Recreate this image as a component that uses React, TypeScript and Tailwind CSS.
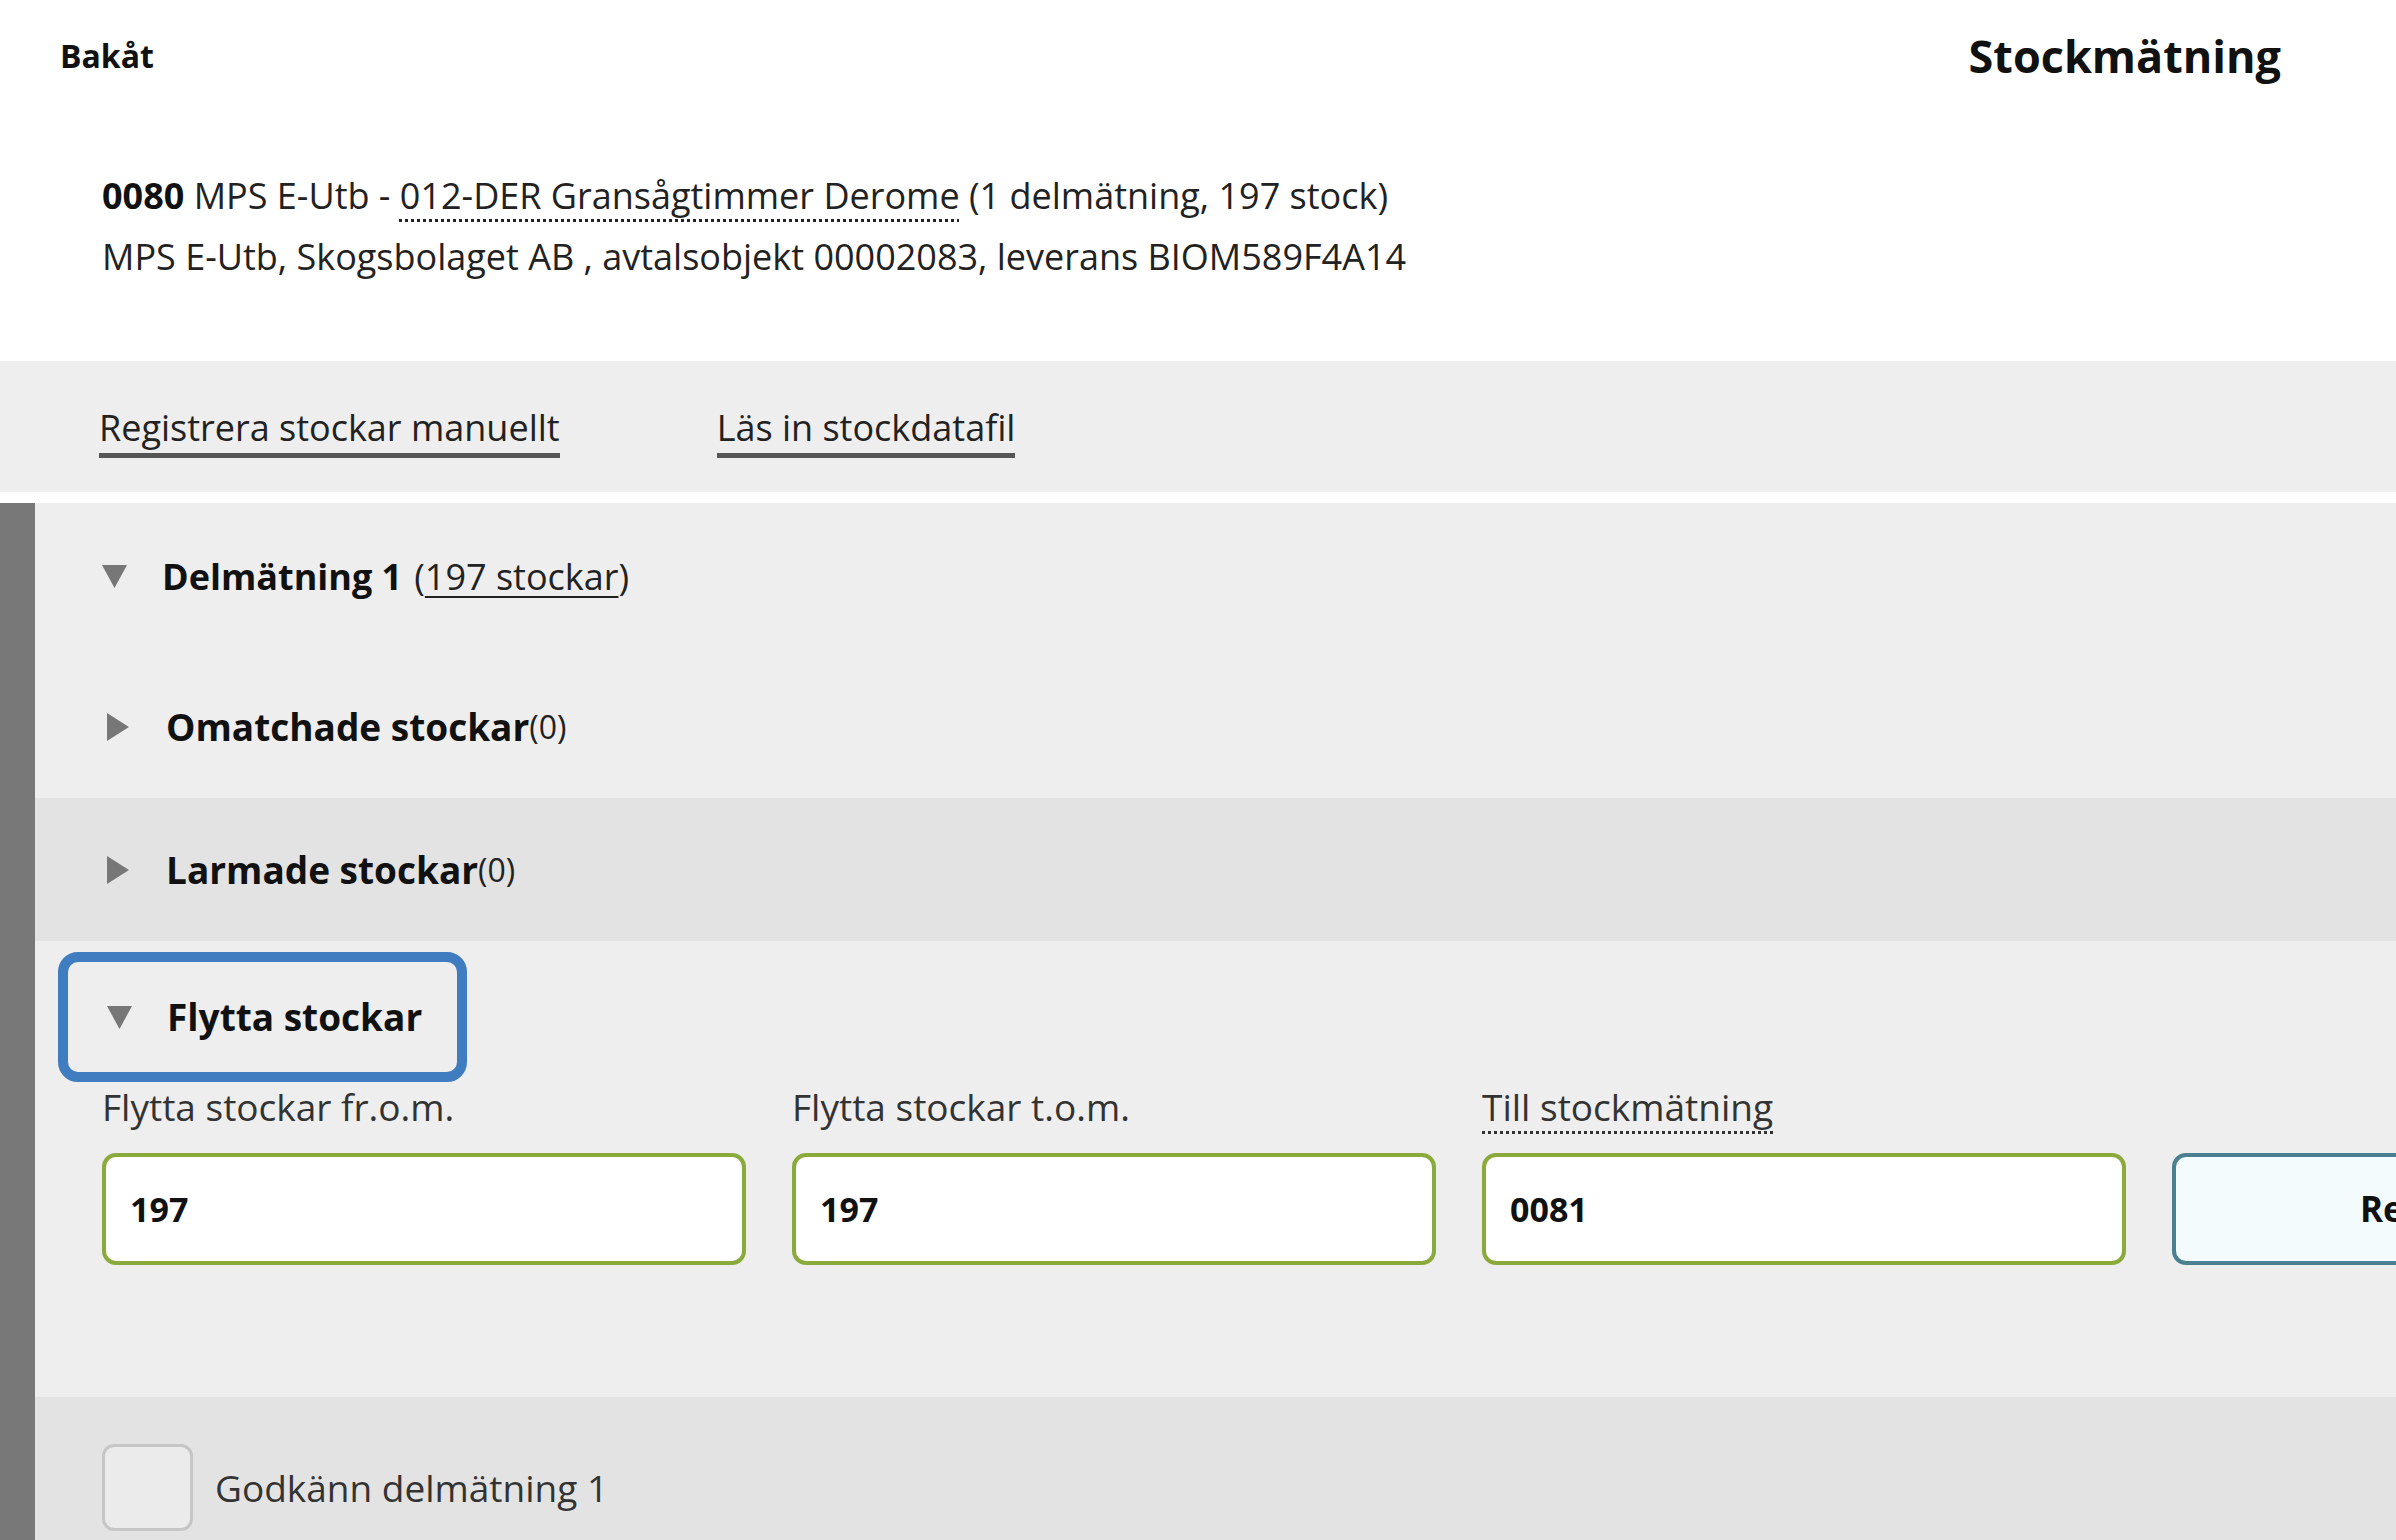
import React from "react";

function TriangleDown() {
  return (
    <svg width="25" height="23" viewBox="0 0 25 23" className="shrink-0">
      <polygon points="0,0 25,0 12.5,23" fill="#777777" />
    </svg>
  );
}

function TriangleRight() {
  return (
    <svg width="22" height="28" viewBox="0 0 22 28" className="shrink-0">
      <polygon points="0,0 22,14 0,28" fill="#777777" />
    </svg>
  );
}

function Field({ label, value, dotted }: { label: string; value: string; dotted?: boolean }) {
  return (
    <div className="flex w-[644px] shrink-0 flex-col">
      <div className="h-[50px] leading-[50px] text-[37px] text-[#333]">
        <span className={dotted ? "underline decoration-dotted decoration-[3px] underline-offset-[10px]" : ""}>{label}</span>
      </div>
      <div className="mt-[21px] flex h-[112px] items-center rounded-[14px] border-[4px] border-[#8aaa3c] bg-white pl-[24px] text-[34px] font-bold text-[#111]">
        {value}
      </div>
    </div>
  );
}

export default function App() {
  return (
    <div className="h-[1540px] w-[2396px] overflow-hidden bg-white font-['Open_Sans',sans-serif] text-[#222]">
      {/* header */}
      <div className="flex h-[112px] items-center justify-between pl-[60px] pr-[115px]">
        <span className="text-[32px] font-bold text-[#111]">Bakåt</span>
        <h1 className="text-[45px] font-bold text-[#111]">Stockmätning</h1>
      </div>
      <div className="pb-[74px] pl-[102px] pt-[53px] text-[36px] leading-[61px]">
        <div>
          <b className="text-[#111]">0080</b> MPS E-Utb -{" "}
          <span className="underline decoration-dotted decoration-[3px] underline-offset-[10px]">012-DER Gransågtimmer Derome</span> (1 delmätning, 197 stock)
        </div>
        <div>MPS E-Utb, Skogsbolaget AB , avtalsobjekt 00002083, leverans BIOM589F4A14</div>
      </div>

      {/* tabs */}
      <div className="flex h-[131px] gap-[157px] bg-[#eeeeee] pl-[99px] pt-[42px] text-[36px]">
        <span className="h-[55px] border-b-[5px] border-[#555] leading-[50px]">Registrera stockar manuellt</span>
        <span className="h-[55px] border-b-[5px] border-[#555] leading-[50px]">Läs in stockdatafil</span>
      </div>
      <div className="h-[11px] bg-white" />

      {/* main */}
      <div className="flex">
        <div className="w-[35px] shrink-0 bg-[#787878]" />
        <div className="flex-1 bg-[#eeeeee]">
          <div className="flex h-[152px] items-center pb-[5px] pl-[67px]">
            <TriangleDown />
            <span className="ml-[35px] text-[36px] font-bold text-[#111]">Delmätning 1</span>
            <span className="ml-[12px] text-[36px]">
              (<span className="underline decoration-2 underline-offset-[6px]">197 stockar</span>)
            </span>
          </div>
          <div className="flex h-[143px] items-center pl-[72px]">
            <TriangleRight />
            <span className="ml-[37px] text-[37px] font-bold text-[#111]">Omatchade stockar</span>
            <span className="text-[32px]">(0)</span>
          </div>
          <div className="flex h-[143px] items-center bg-[#e3e3e3] pl-[72px]">
            <TriangleRight />
            <span className="ml-[37px] text-[37px] font-bold text-[#111]">Larmade stockar</span>
            <span className="text-[32px]">(0)</span>
          </div>

          {/* Flytta stockar */}
          <div className="h-[456px] pt-[11px]">
            <div className="ml-[23px] flex h-[130px] w-[409px] items-center rounded-[20px] border-[10px] border-[#3f7cc0] pl-[39px]">
              <TriangleDown />
              <span className="ml-[35px] text-[37px] font-bold text-[#111]">Flytta stockar</span>
            </div>
            <div className="flex gap-[46px] pl-[67px]">
              <Field label="Flytta stockar fr.o.m." value="197" />
              <Field label="Flytta stockar t.o.m." value="197" />
              <Field label="Till stockmätning" value="0081" dotted />
              <div className="flex w-[644px] shrink-0 flex-col">
                <div className="h-[50px]" />
                <button className="mt-[21px] flex h-[112px] items-center rounded-[14px] border-[4px] border-[#4a8090] bg-[#f4fbfd] pl-[184px] text-[35px] font-bold text-[#111]">
                  Registrera flytt
                </button>
              </div>
            </div>
          </div>

          {/* approve */}
          <div className="flex h-[200px] items-start bg-[#e3e3e3] pl-[67px] pt-[47px]">
            <div className="h-[87px] w-[91px] shrink-0 rounded-[12px] border-[3px] border-[#c6c6c6] bg-[#ebebeb]" />
            <span className="ml-[22px] h-[87px] text-[37px] leading-[87px] text-[#333]">Godkänn delmätning 1</span>
          </div>
        </div>
      </div>
    </div>
  );
}
